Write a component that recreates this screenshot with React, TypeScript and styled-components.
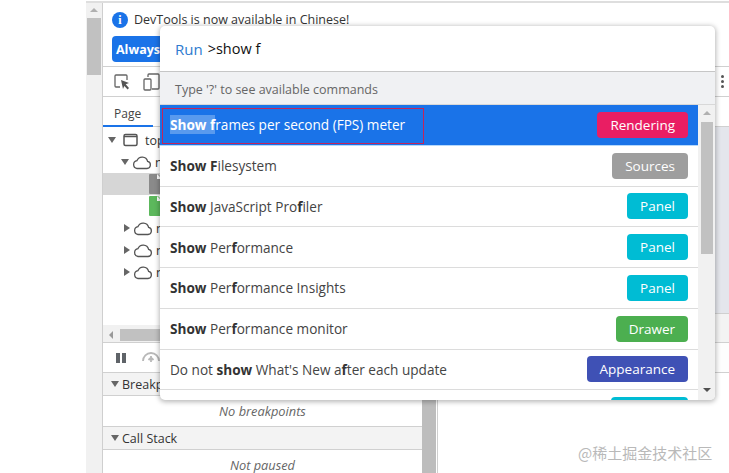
import React from "react";
import styled, { createGlobalStyle } from "styled-components";

const Global = createGlobalStyle`
  html, body { margin: 0; padding: 0; background: #fff; overflow: hidden; }
  * { box-sizing: border-box; }
  body { font-family: "Open Sans", "Noto Sans", Arial, sans-serif; }
`;

const Page = styled.div`
  position: relative;
  width: 729px;
  height: 473px;
  overflow: hidden;
  display: flex;
  background: #fff;
  padding-left: 86px;
  padding-top: 1px;
`;
const PageFrame = styled.div`
  flex: 1;
  display: flex;
  border-top: 2px solid #dedede;
  min-width: 0;
`;
const PageScroll = styled.div`
  width: 17px;
  background: #f1f1f1;
  border-right: 1px solid #cfcfcf;
  padding: 5px 1px 0;
  display: flex;
  flex-direction: column;
  align-items: center;
  flex: none;
`;
const UpArrow = styled.div`
  width: 0;
  height: 0;
  border-left: 4px solid transparent;
  border-right: 4px solid transparent;
  border-bottom: 4px solid #b0b0b0;
`;
const PageThumb = styled.div`
  width: 14px;
  height: 57px;
  margin-top: 6px;
  background: #c1c1c1;
`;
const DevTools = styled.div`
  flex: 1;
  display: flex;
  flex-direction: column;
  min-width: 0;
  color: #333;
  font-size: 12.5px;
`;
const InfoBar = styled.div`
  height: 64px;
  padding: 6px 0 0 9px;
  border-bottom: 1px solid #d0d0d0;
  flex: none;
`;
const InfoLine = styled.div`
  display: flex;
  align-items: center;
  gap: 6px;
  height: 21px;
  font-size: 12.5px;
  color: #333;
  white-space: nowrap;
`;
const InfoDot = styled.div`
  width: 16px;
  height: 16px;
  border-radius: 50%;
  background: #1a73e8;
  color: #fff;
  font: bold 12px "Liberation Serif", serif;
  text-align: center;
  line-height: 16px;
`;
const AlwaysButton = styled.div`
  margin-top: 6px;
  width: 120px;
  height: 26px;
  border-radius: 4px;
  background: #1a73e8;
  color: #fff;
  font-weight: 700;
  font-size: 12.5px;
  line-height: 27px;
  padding-left: 4px;
`;
const ToolBar = styled.div`
  height: 30px;
  flex: none;
  display: flex;
  align-items: center;
  padding-left: 10px;
  gap: 12px;
  border-bottom: 1px solid #d0d0d0;
  position: relative;
`;
const Dots = styled.div`
  margin-left: auto;
  margin-right: 5px;
  display: flex;
  flex-direction: column;
  gap: 2px;
`;
const Dot = styled.i`
  display: block;
  width: 3px;
  height: 3px;
  border-radius: 50%;
  background: #555;
`;
const Body = styled.div`
  flex: 1;
  display: flex;
  min-height: 0;
`;
const LeftPane = styled.div`
  width: 319px;
  flex: none;
  display: flex;
  flex-direction: column;
`;
const Tabs = styled.div`
  height: 30px;
  flex: none;
  border-bottom: 1px solid #d0d0d0;
`;
const Tab = styled.div`
  width: 50px;
  height: 30px;
  border-bottom: 2px solid #1a73e8;
  padding: 8px 0 0 11px;
  font-size: 12px;
  color: #444;
`;
const Tree = styled.div`
  height: 198px;
  flex: none;
  padding-top: 2px;
`;
const TreeRow = styled.div<{ $indent: number; $selected?: boolean }>`
  height: 22px;
  display: flex;
  align-items: center;
  gap: 3px;
  padding-left: ${(p) => p.$indent}px;
  background: ${(p) => (p.$selected ? "#d6d6d6" : "transparent")};
  font-size: 12.5px;
`;
const Tri = styled.span<{ $open?: boolean }>`
  width: 0;
  height: 0;
  flex: none;
  ${(p) =>
    p.$open
      ? `border-left:4px solid transparent;border-right:4px solid transparent;border-top:6px solid #666;`
      : `border-top:4px solid transparent;border-bottom:4px solid transparent;border-left:6px solid #666;`}
`;
const FrameSlot = styled.span`
  margin: 0 4px 0 4px;
  display: flex;
`;
const HScroll = styled.div`
  height: 17px;
  flex: none;
  background: #f1f1f1;
  display: flex;
  align-items: center;
  padding: 3px 0 0 6px;
`;
const LeftArrow = styled.div`
  width: 0;
  height: 0;
  border-top: 4px solid transparent;
  border-bottom: 4px solid transparent;
  border-right: 4px solid #999;
`;
const HThumb = styled.div`
  margin-left: 7px;
  width: 120px;
  height: 12px;
  background: #c1c1c1;
`;
const DebugBar = styled.div`
  height: 30px;
  flex: none;
  border-top: 1px solid #d0d0d0;
  display: flex;
  align-items: center;
  padding-left: 12px;
  gap: 14px;
`;
const SectionHead = styled.div`
  height: 24px;
  flex: none;
  background: #f3f3f3;
  border-top: 1px solid #d0d0d0;
  border-bottom: 1px solid #d0d0d0;
  display: flex;
  align-items: center;
  gap: 3px;
  padding-left: 8px;
  font-size: 12.5px;
  color: #333;
`;
const SmallTri = styled.span`
  width: 0;
  height: 0;
  border-left: 4px solid transparent;
  border-right: 4px solid transparent;
  border-top: 6px solid #666;
`;
const SectionEmpty = styled.div`
  height: 30px;
  flex: none;
  text-align: center;
  line-height: 30px;
  font-style: italic;
  font-size: 12.8px;
  color: #666;
`;
const PaneScroll = styled.div`
  width: 14px;
  flex: none;
  background: #bdbdbd;
`;
const PaneGap = styled.div`
  width: 1px;
  flex: none;
  background: #fff;
`;
const PaneRule = styled.div`
  width: 1px;
  flex: none;
  background: #cfcfcf;
`;
const RightPane = styled.div`
  flex: 1;
  display: flex;
  flex-direction: column;
`;
const Band = styled.div<{ $h: number; $bg: string }>`
  height: ${(p) => p.$h}px;
  flex: none;
  background: ${(p) => p.$bg};
  border-bottom: 1px solid #d0d0d0;
`;

const Dialog = styled.div`
  position: absolute;
  left: 160px;
  top: 26px;
  width: 555px;
  height: 374px;
  background: #fff;
  border-radius: 5px;
  box-shadow: 0 1px 5px 1px rgba(0, 0, 0, 0.28);
  overflow: hidden;
  display: flex;
  flex-direction: column;
`;
const InputRow = styled.div`
  height: 46px;
  flex: none;
  display: flex;
  align-items: center;
  padding: 0 0 0 15px;
  border-bottom: 1px solid #c6c6c6;
  font-size: 15px;
`;
const RunLabel = styled.span`
  color: #2e7bcf;
  margin-right: 5px;
`;
const Query = styled.span`
  color: #111;
  font-size: 14.5px;
`;
const Hint = styled.div`
  height: 33px;
  flex: none;
  background: #f0f1f3;
  padding: 9px 0 0 15px;
  font-size: 12.5px;
  color: #666;
  border-bottom: 1px solid #d8d8d8;
`;
const ListWrap = styled.div`
  flex: 1;
  min-height: 0;
  display: flex;
`;
const List = styled.div`
  flex: 1;
  min-width: 0;
  overflow: hidden;
`;
const Row = styled.div<{ $active?: boolean }>`
  position: relative;
  height: 40.75px;
  display: flex;
  align-items: center;
  justify-content: space-between;
  padding: 0 10px;
  background: ${(p) => (p.$active ? "#1a73e8" : "#fff")};
  border-bottom: 1px solid ${(p) => (p.$active ? "#b5d8fb" : "#dcdcdc")};
  color: ${(p) => (p.$active ? "#fff" : "#444")};
  font-size: 13.6px;
`;
const PeekRow = styled.div`
  display: flex;
  justify-content: flex-end;
  padding: 7px 10px 0 0;
`;
const PeekBadge = styled.div`
  width: 77px;
  height: 26px;
  border-radius: 4px;
  background: #00bcd4;
`;
const Match = styled.b<{ $hl?: boolean }>`
  font-weight: 700;
  color: ${(p) => (p.$hl ? "#fff" : "#333")};
  background: ${(p) => (p.$hl ? "rgba(255,255,255,.28)" : "transparent")};
`;
const Badge = styled.span<{ $bg: string }>`
  height: 26px;
  line-height: 26px;
  padding: 0 13px;
  border-radius: 4px;
  background: ${(p) => p.$bg};
  color: #fff;
  font-size: 13.5px;
`;
const Marker = styled.div`
  position: absolute;
  left: 2px;
  top: 3px;
  width: 262px;
  height: 36px;
  border: 1px solid #c2255c;
`;
const ListScroll = styled.div`
  width: 17px;
  flex: none;
  background: #f1f1f1;
  padding: 6px 2px 0;
  display: flex;
  flex-direction: column;
  align-items: center;
  position: relative;
`;
const DownArrow = styled.div`
  position: absolute;
  bottom: 8px;
  width: 0;
  height: 0;
  border-left: 4px solid transparent;
  border-right: 4px solid transparent;
  border-top: 4px solid #505050;
`;
const ListThumb = styled.div`
  width: 12px;
  height: 132px;
  margin-top: 7px;
  background: #c1c1c1;
`;
const Watermark = styled.div`
  position: absolute;
  left: 578px;
  top: 442px;
  font-family: "Noto Sans CJK SC", sans-serif;
  font-size: 15px;
  color: #b9b9b9;
  white-space: nowrap;
`;

const Cloud = () => (
  <svg width="20" height="15" viewBox="0 0 20 15" fill="none" stroke="#555" strokeWidth="1.3">
    <path d="M5 13.5h10a3.6 3.6 0 0 0 .6-7.1A5.6 5.6 0 0 0 5 5.6a4 4 0 0 0 0 7.9z" />
  </svg>
);
const FrameIcon = () => (
  <svg width="15" height="14" viewBox="0 0 15 14" fill="none" stroke="#555" strokeWidth="1.5">
    <rect x="1" y="1.5" width="13" height="11" rx="1.5" />
    <path d="M1 3.5h13" />
  </svg>
);
const FileIcon = ({ color }: { color: string }) => (
  <svg width="13" height="20" viewBox="0 0 13 20">
    <path d="M1 0h8l4 4v15a1 1 0 0 1-1 1H1a1 1 0 0 1-1-1V1a1 1 0 0 1 1-1z" fill={color} />
    <path d="M8 0l5 5H8z" fill="#fff" />
  </svg>
);
const InspectIcon = () => (
  <svg width="18" height="18" viewBox="0 0 18 18" fill="none">
    <path d="M7 14H3a1 1 0 0 1-1-1V3a1 1 0 0 1 1-1h10a1 1 0 0 1 1 1v4" stroke="#666" strokeWidth="1.3" />
    <path d="M8 7l8 3-3.3 1.3L16 15l-1.4 1.4-3.3-3.5L10 16z" fill="#555" />
  </svg>
);
const DeviceIcon = () => (
  <svg width="18" height="18" viewBox="0 0 18 18" fill="none" stroke="#666" strokeWidth="1.3">
    <rect x="1" y="6" width="7" height="11" rx="1" />
    <path d="M5 4V2a1 1 0 0 1 1-1h9a1 1 0 0 1 1 1v13a1 1 0 0 1-1 1H9" />
  </svg>
);
const PauseIcon = () => (
  <svg width="12" height="12" viewBox="0 0 12 12" fill="#5f6368">
    <rect x="1" y="1" width="4" height="10" />
    <rect x="7" y="1" width="4" height="10" />
  </svg>
);
const StepIcon = () => (
  <svg width="20" height="14" viewBox="0 0 20 14" fill="none" stroke="#b8b8b8" strokeWidth="1.8">
    <path d="M2 10a8 8 0 0 1 16 0" />
    <path d="M10 5v6M7.5 9L10 6.5 12.5 9" />
  </svg>
);

const rows: { key: string; content: React.ReactNode; badge: string; color: string }[] = [
  { key: "fs", content: <><Match>Show F</Match>ilesystem</>, badge: "Sources", color: "#9e9e9e" },
  { key: "js", content: <><Match>Show</Match> JavaScript Pro<Match>f</Match>iler</>, badge: "Panel", color: "#00bcd4" },
  { key: "pf", content: <><Match>Show</Match> Per<Match>f</Match>ormance</>, badge: "Panel", color: "#00bcd4" },
  { key: "pi", content: <><Match>Show</Match> Per<Match>f</Match>ormance Insights</>, badge: "Panel", color: "#00bcd4" },
  { key: "pm", content: <><Match>Show</Match> Per<Match>f</Match>ormance monitor</>, badge: "Drawer", color: "#4caf50" },
  { key: "wn", content: <>Do not <Match>show</Match> What's New a<Match>f</Match>ter each update</>, badge: "Appearance", color: "#3f51b5" },
];

export default function App() {
  return (
    <Page>
      <Global />
      <PageFrame>
        <PageScroll>
          <UpArrow />
          <PageThumb />
        </PageScroll>
        <DevTools>
          <InfoBar>
            <InfoLine>
              <InfoDot>i</InfoDot>
              DevTools is now available in Chinese!
            </InfoLine>
            <AlwaysButton>Always</AlwaysButton>
          </InfoBar>
          <ToolBar>
            <InspectIcon />
            <DeviceIcon />
            <Dots>
              <Dot />
              <Dot />
              <Dot />
            </Dots>
          </ToolBar>
          <Body>
            <LeftPane>
              <Tabs>
                <Tab>Page</Tab>
              </Tabs>
              <Tree>
                <TreeRow $indent={5}><Tri $open /><FrameSlot><FrameIcon /></FrameSlot> top</TreeRow>
                <TreeRow $indent={18}><Tri $open /><Cloud /> n</TreeRow>
                <TreeRow $indent={46} $selected><FileIcon color="#8a8a8a" /></TreeRow>
                <TreeRow $indent={46}><FileIcon color="#5cb85c" /></TreeRow>
                <TreeRow $indent={21}><Tri /><Cloud /> n</TreeRow>
                <TreeRow $indent={21}><Tri /><Cloud /> n</TreeRow>
                <TreeRow $indent={21}><Tri /><Cloud /> n</TreeRow>
              </Tree>
              <HScroll>
                <LeftArrow />
                <HThumb />
              </HScroll>
              <DebugBar>
                <PauseIcon />
                <StepIcon />
              </DebugBar>
              <SectionHead><SmallTri />Breakpoints</SectionHead>
              <SectionEmpty>No breakpoints</SectionEmpty>
              <SectionHead><SmallTri />Call Stack</SectionHead>
              <SectionEmpty>Not paused</SectionEmpty>
            </LeftPane>
            <PaneScroll />
            <PaneGap />
            <PaneRule />
            <RightPane>
              <Band $h={30} $bg="#fff" />
              <Band $h={187} $bg="#e4e6ec" />
              <Band $h={29} $bg="#f3f3f3" />
              <Band $h={30} $bg="#fdfdfd" />
            </RightPane>
          </Body>
        </DevTools>
      </PageFrame>

      <Dialog>
        <InputRow>
          <RunLabel>Run</RunLabel>
          <Query>&gt;show f</Query>
        </InputRow>
        <Hint>Type '?' to see available commands</Hint>
        <ListWrap>
          <List>
            <Row $active>
              <span>
                <Match $hl>Show f</Match>rames per second (FPS) meter
              </span>
              <Badge $bg="#e91e63">Rendering</Badge>
              <Marker />
            </Row>
            {rows.map((r) => (
              <Row key={r.key}>
                <span>{r.content}</span>
                <Badge $bg={r.color}>{r.badge}</Badge>
              </Row>
            ))}
            <PeekRow>
              <PeekBadge />
            </PeekRow>
          </List>
          <ListScroll>
            <UpArrow />
            <ListThumb />
            <DownArrow />
          </ListScroll>
        </ListWrap>
      </Dialog>
      <Watermark>@稀土掘金技术社区</Watermark>
    </Page>
  );
}
